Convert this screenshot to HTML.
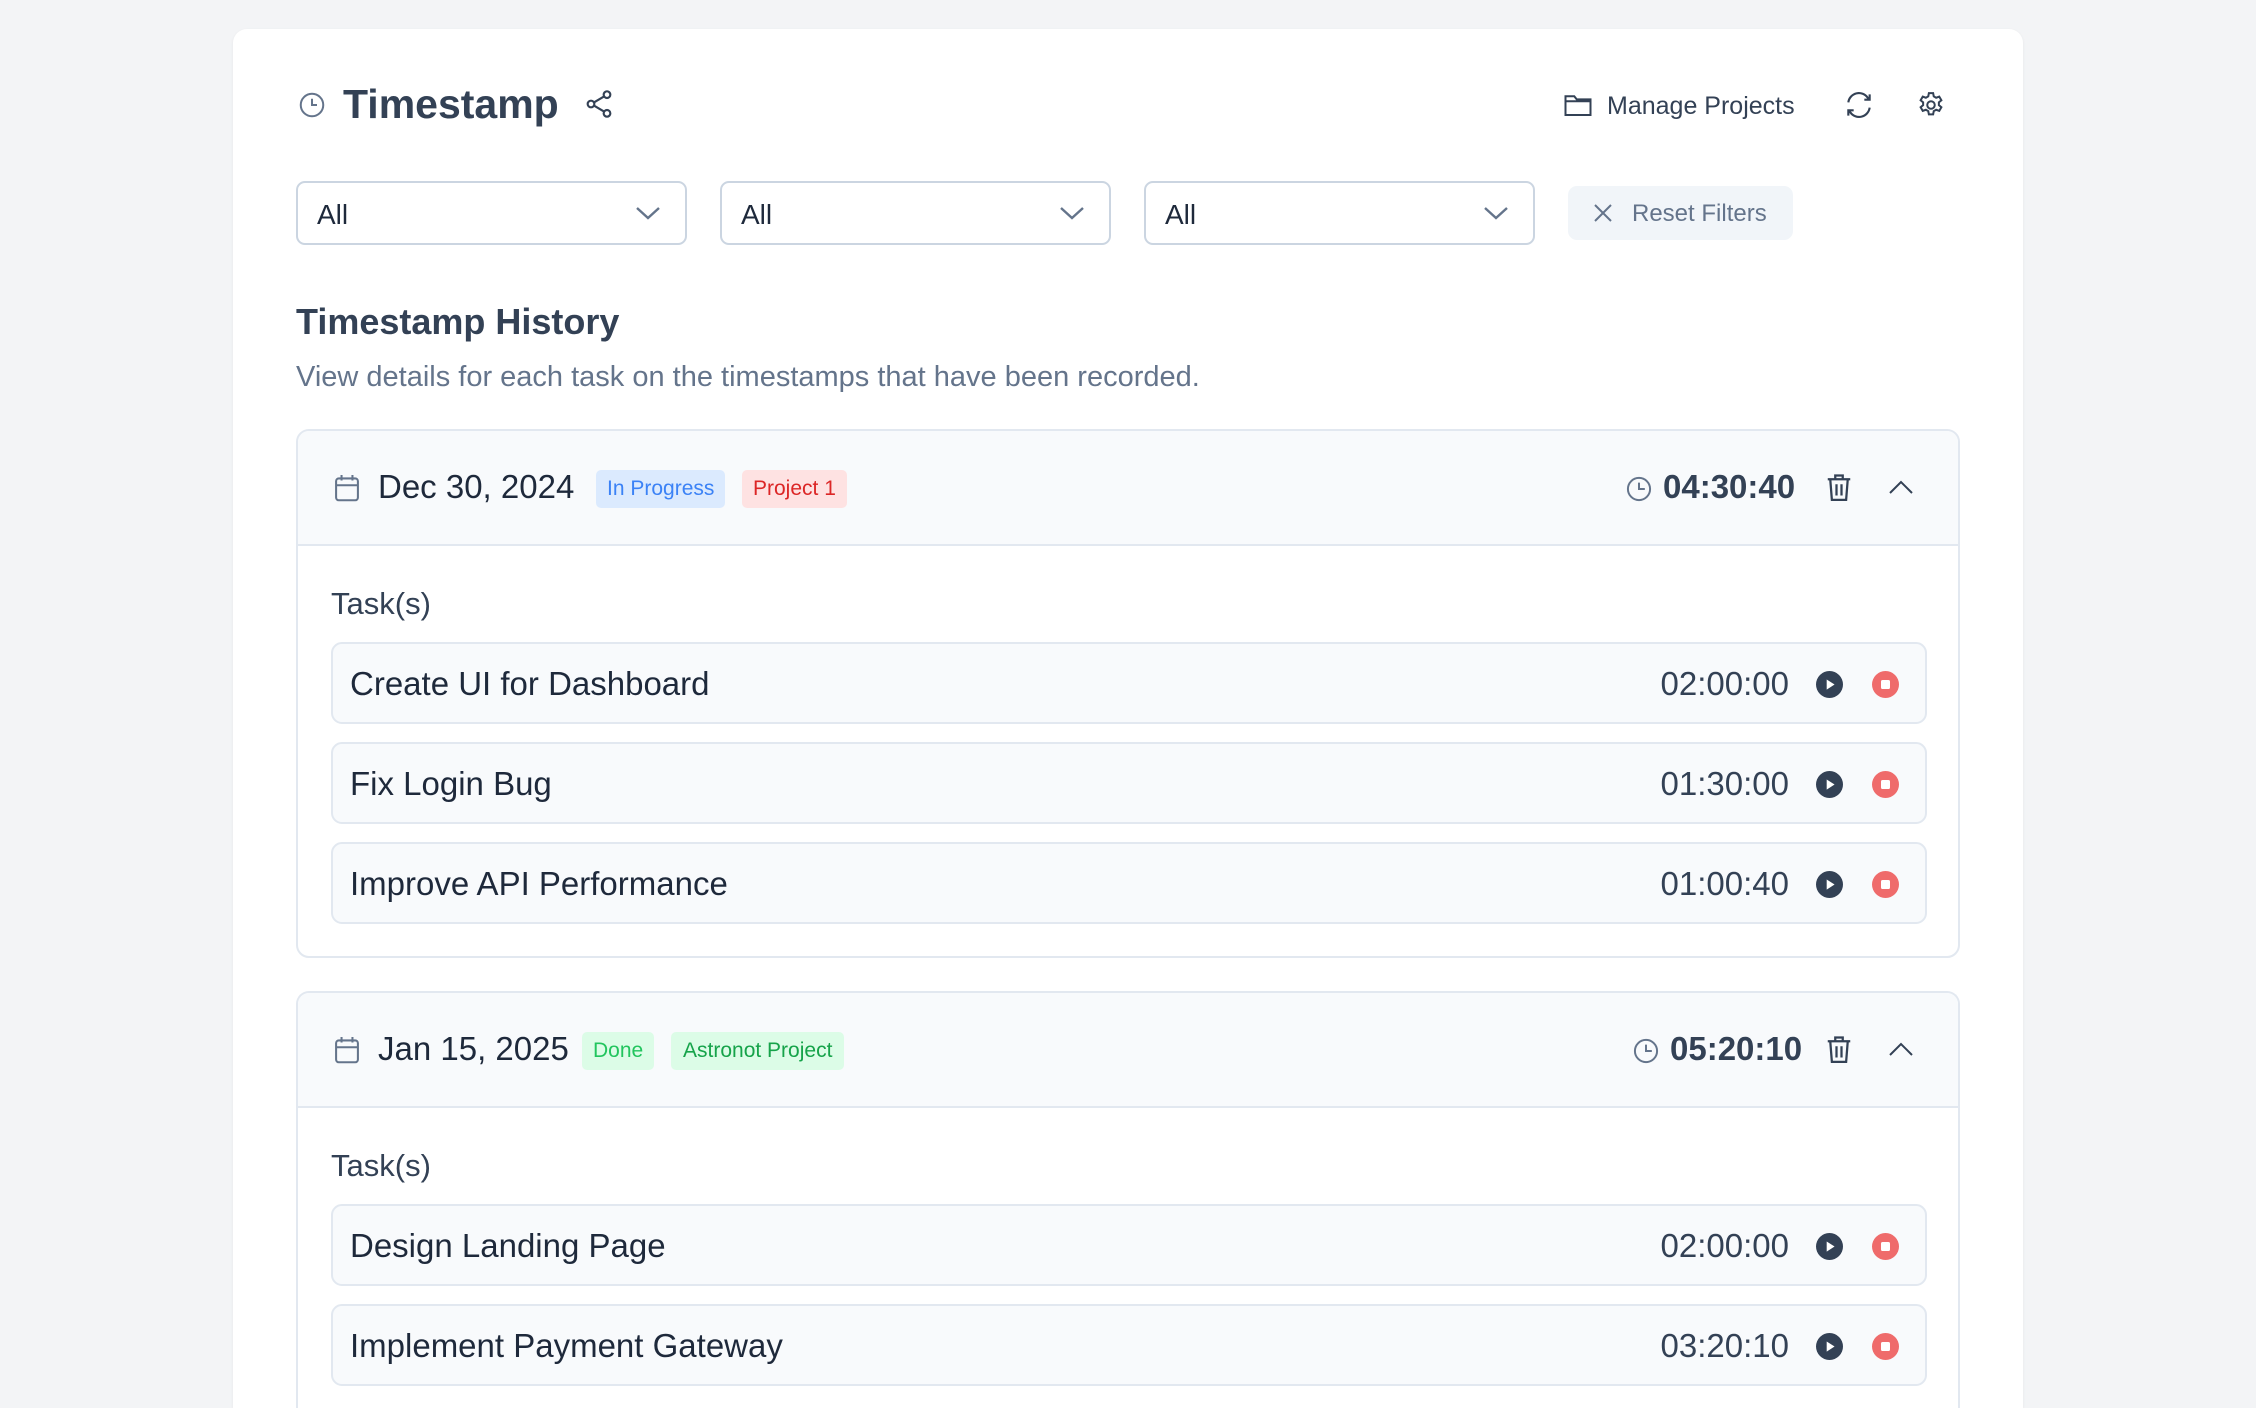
<!DOCTYPE html>
<html><head><meta charset="utf-8"><style>
*{box-sizing:border-box;margin:0;padding:0}
html,body{width:2256px;height:1408px;overflow:hidden}
body{background:#f3f4f6;font-family:"Liberation Sans",sans-serif;color:#334155;position:relative}
#wrap{position:absolute;left:0;top:0;width:2256px;height:1408px;overflow:hidden}
.card{position:absolute;left:233px;top:29px;width:1790px;height:1379px;background:#fff;border-radius:14px 14px 0 0;box-shadow:0 1px 3px rgba(0,0,0,.06)}
.a{position:absolute}
svg{display:block}
.sel{position:absolute;top:181px;width:391px;height:64px;border:2px solid #cbd5e1;border-radius:9px;font-size:28px;color:#1e293b;padding:16px 0 0 19px}
.sel svg{position:absolute;right:24px;top:21px}
.grp{position:absolute;left:296px;width:1664px;border:2px solid #e2e8f0;border-radius:13px;overflow:hidden;background:#fff}
.hd{height:115px;background:#f8fafc;border-bottom:2px solid #e2e8f0;position:relative}
.badge{position:absolute;top:39px;height:38px;border-radius:5px;font-size:21px;line-height:38px;padding:0 11px}
.row{position:absolute;left:33px;width:1596px;height:82px;background:#f8fafc;border:2px solid #e2e8f0;border-radius:11px}
.row .t{position:absolute;left:17px;top:21px;font-size:33px;color:#1e293b}
.row .tm{position:absolute;right:136px;top:21px;font-size:33px;color:#334155}
.row .pl{position:absolute;right:82px;top:27px}
.row .st{position:absolute;right:26px;top:27px}
</style></head><body><div id="wrap">
<div class="card"></div>
<svg class="a" style="left:297px;top:90px" width="30" height="30" viewBox="0 0 24 24" fill="none" stroke="#64748b" stroke-width="1.6"><circle cx="12" cy="12" r="9"/><path d="M12 7v5h4"/></svg>
<div class="a" style="left:343px;top:81px;font-size:41px;font-weight:bold;color:#334155">Timestamp</div>
<svg class="a" style="left:583px;top:88px" width="32" height="32" viewBox="0 0 24 24" fill="none" stroke="#334155" stroke-width="1.6"><circle cx="18" cy="5" r="2.5"/><circle cx="6" cy="12" r="2.5"/><circle cx="18" cy="19" r="2.5"/><path d="M8.2 10.8l7.6-4.5M8.2 13.2l7.6 4.5"/></svg>
<svg class="a" style="left:1563px;top:91px" width="30" height="28" viewBox="0 0 24 22" fill="none" stroke="#334155" stroke-width="1.6"><path d="M2 4h7l2 2.5h11V19H2z M2 8h20"/></svg>
<div class="a" style="left:1607px;top:92px;font-size:25px;color:#334155">Manage Projects</div>
<svg class="a" style="left:1843px;top:89px" width="32" height="32" viewBox="0 0 24 24" fill="none" stroke="#334155" stroke-width="1.6"><path d="M4 10a8 8 0 0 1 14.5-3.5L20 8M20 4v4h-4M20 14a8 8 0 0 1-14.5 3.5L4 16M4 20v-4h4"/></svg>
<svg class="a" style="left:1916px;top:90px" width="30" height="30" viewBox="0 0 24 24" fill="none" stroke="#334155" stroke-width="1.6"><path d="M10.3 2.5h3.4l.5 2.6 1.9 1.1 2.5-.9 1.7 2.9-2 1.7v2.2l2 1.7-1.7 2.9-2.5-.9-1.9 1.1-.5 2.6h-3.4l-.5-2.6-1.9-1.1-2.5.9-1.7-2.9 2-1.7v-2.2l-2-1.7 1.7-2.9 2.5.9 1.9-1.1z"/><circle cx="12" cy="12" r="3"/></svg>

<div class="sel" style="left:296px">All<svg width="26" height="18" viewBox="0 0 26 18" fill="none" stroke="#64748b" stroke-width="2.4"><path d="M2 4l11 10 11-10"/></svg></div>
<div class="sel" style="left:720px">All<svg width="26" height="18" viewBox="0 0 26 18" fill="none" stroke="#64748b" stroke-width="2.4"><path d="M2 4l11 10 11-10"/></svg></div>
<div class="sel" style="left:1144px">All<svg width="26" height="18" viewBox="0 0 26 18" fill="none" stroke="#64748b" stroke-width="2.4"><path d="M2 4l11 10 11-10"/></svg></div>
<div class="a" style="left:1568px;top:186px;width:225px;height:54px;background:#f1f5f9;border-radius:9px"></div>
<svg class="a" style="left:1592px;top:202px" width="22" height="22" viewBox="0 0 22 22" stroke="#64748b" stroke-width="2"><path d="M3 3l16 16M19 3L3 19"/></svg>
<div class="a" style="left:1632px;top:200px;font-size:24px;color:#64748b">Reset Filters</div>

<div class="a" style="left:296px;top:301px;font-size:36px;font-weight:bold;color:#334155">Timestamp History</div>
<div class="a" style="left:296px;top:361px;font-size:29px;color:#64748b">View details for each task on the timestamps that have been recorded.</div>

<div class="grp" style="top:429px;height:529px">
 <div class="hd">
  <svg class="a" style="left:35px;top:42px" width="28" height="30" viewBox="0 0 20 22" fill="none" stroke="#64748b" stroke-width="1.5"><rect x="2" y="4" width="16" height="16" rx="2"/><path d="M2 9h16M6 1.5v4M14 1.5v4"/></svg>
  <div class="a" style="left:80px;top:37px;font-size:33px;color:#1e293b">Dec 30, 2024</div>
  <div class="badge" style="left:298px;background:#dbeafe;color:#3b82f6">In Progress</div>
  <div class="badge" style="left:444px;background:#fee2e2;color:#dc2626">Project 1</div>
  <svg class="a" style="left:1327px;top:44px" width="28" height="28" viewBox="0 0 24 24" fill="none" stroke="#64748b" stroke-width="1.7"><circle cx="12" cy="12" r="9.5"/><path d="M12 6.5V12h5"/></svg>
  <div class="a" style="left:1365px;top:37px;font-size:33px;font-weight:bold;color:#334155">04:30:40</div>
  <svg class="a" style="left:1527px;top:42px" width="28" height="30" viewBox="0 0 22 24" fill="none" stroke="#334155" stroke-width="1.8"><path d="M2 5h18M8 5V2h6v3M4 5l1.3 16.5h11.4L18 5M9 9v9M13 9v9"/></svg>
  <svg class="a" style="left:1590px;top:48px" width="26" height="16" viewBox="0 0 26 16" fill="none" stroke="#334155" stroke-width="2"><path d="M2 14L13 3l11 11"/></svg>
 </div>
 <div class="a" style="left:33px;top:155px;font-size:31px;color:#334155">Task(s)</div>
 <div class="row" style="top:211px"><div class="t">Create UI for Dashboard</div><div class="tm">02:00:00</div><svg class="pl" width="27" height="27" viewBox="0 0 24 24"><circle cx="12" cy="12" r="12" fill="#334155"/><path d="M9.5 7.5l7 4.5-7 4.5z" fill="#fff"/></svg><svg class="st" width="27" height="27" viewBox="0 0 24 24"><circle cx="12" cy="12" r="12" fill="#ef6b6b"/><rect x="8" y="8" width="8" height="8" rx="1.5" fill="#fff"/></svg></div>
 <div class="row" style="top:311px"><div class="t">Fix Login Bug</div><div class="tm">01:30:00</div><svg class="pl" width="27" height="27" viewBox="0 0 24 24"><circle cx="12" cy="12" r="12" fill="#334155"/><path d="M9.5 7.5l7 4.5-7 4.5z" fill="#fff"/></svg><svg class="st" width="27" height="27" viewBox="0 0 24 24"><circle cx="12" cy="12" r="12" fill="#ef6b6b"/><rect x="8" y="8" width="8" height="8" rx="1.5" fill="#fff"/></svg></div>
 <div class="row" style="top:411px"><div class="t">Improve API Performance</div><div class="tm">01:00:40</div><svg class="pl" width="27" height="27" viewBox="0 0 24 24"><circle cx="12" cy="12" r="12" fill="#334155"/><path d="M9.5 7.5l7 4.5-7 4.5z" fill="#fff"/></svg><svg class="st" width="27" height="27" viewBox="0 0 24 24"><circle cx="12" cy="12" r="12" fill="#ef6b6b"/><rect x="8" y="8" width="8" height="8" rx="1.5" fill="#fff"/></svg></div>
</div>

<div class="grp" style="top:991px;height:417px;border-bottom:none;border-radius:13px 13px 0 0">
 <div class="hd">
  <svg class="a" style="left:35px;top:42px" width="28" height="30" viewBox="0 0 20 22" fill="none" stroke="#64748b" stroke-width="1.5"><rect x="2" y="4" width="16" height="16" rx="2"/><path d="M2 9h16M6 1.5v4M14 1.5v4"/></svg>
  <div class="a" style="left:80px;top:37px;font-size:33px;color:#1e293b">Jan 15, 2025</div>
  <div class="badge" style="left:284px;background:#dcfce7;color:#22c55e">Done</div>
  <div class="badge" style="left:373px;background:#dcfce7;color:#16a34a;padding:0 12px">Astronot Project</div>
  <svg class="a" style="left:1334px;top:44px" width="28" height="28" viewBox="0 0 24 24" fill="none" stroke="#64748b" stroke-width="1.7"><circle cx="12" cy="12" r="9.5"/><path d="M12 6.5V12h5"/></svg>
  <div class="a" style="left:1372px;top:37px;font-size:33px;font-weight:bold;color:#334155">05:20:10</div>
  <svg class="a" style="left:1527px;top:42px" width="28" height="30" viewBox="0 0 22 24" fill="none" stroke="#334155" stroke-width="1.8"><path d="M2 5h18M8 5V2h6v3M4 5l1.3 16.5h11.4L18 5M9 9v9M13 9v9"/></svg>
  <svg class="a" style="left:1590px;top:48px" width="26" height="16" viewBox="0 0 26 16" fill="none" stroke="#334155" stroke-width="2"><path d="M2 14L13 3l11 11"/></svg>
 </div>
 <div class="a" style="left:33px;top:155px;font-size:31px;color:#334155">Task(s)</div>
 <div class="row" style="top:211px"><div class="t">Design Landing Page</div><div class="tm">02:00:00</div><svg class="pl" width="27" height="27" viewBox="0 0 24 24"><circle cx="12" cy="12" r="12" fill="#334155"/><path d="M9.5 7.5l7 4.5-7 4.5z" fill="#fff"/></svg><svg class="st" width="27" height="27" viewBox="0 0 24 24"><circle cx="12" cy="12" r="12" fill="#ef6b6b"/><rect x="8" y="8" width="8" height="8" rx="1.5" fill="#fff"/></svg></div>
 <div class="row" style="top:311px"><div class="t">Implement Payment Gateway</div><div class="tm">03:20:10</div><svg class="pl" width="27" height="27" viewBox="0 0 24 24"><circle cx="12" cy="12" r="12" fill="#334155"/><path d="M9.5 7.5l7 4.5-7 4.5z" fill="#fff"/></svg><svg class="st" width="27" height="27" viewBox="0 0 24 24"><circle cx="12" cy="12" r="12" fill="#ef6b6b"/><rect x="8" y="8" width="8" height="8" rx="1.5" fill="#fff"/></svg></div>
</div>
</div></body></html>
